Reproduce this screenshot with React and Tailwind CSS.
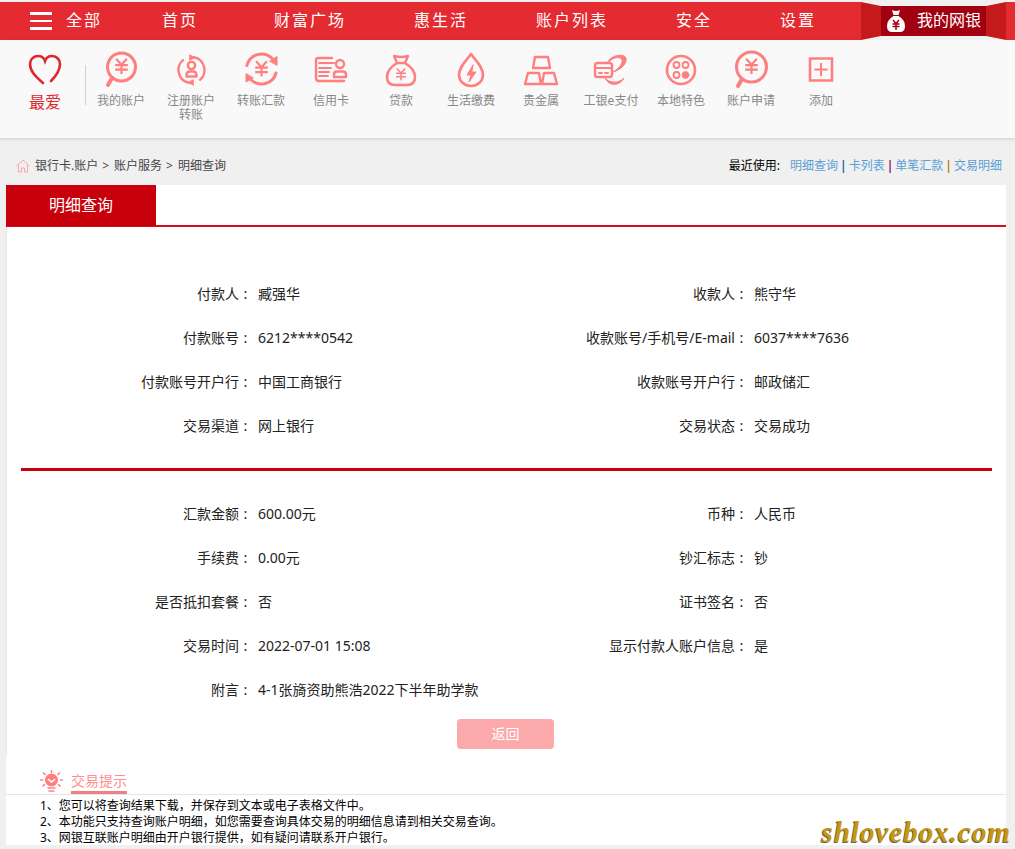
const pink = "#ff7f7f";

function Yen({ x = 20, y = 17, s = 0.9, width = 2.4 }) {
  return (
    <g transform={`translate(${x} ${y}) scale(${s})`} fill="none" stroke={pink} strokeWidth={width} strokeLinecap="butt">
      <path d="M-6 -8 L0 -1.5 L6 -8 M-7 -1 H7 M-7 4 H7 M0 -1.5 V9" />
    </g>
  );
}

function IconBox({ children }) {
  return (
    <svg width="40" height="40" viewBox="0 0 40 40" fill="none" stroke={pink} strokeWidth="2.4" strokeLinecap="round" strokeLinejoin="round">
      {children}
    </svg>
  );
}

const icons = {
  account: (
    <IconBox>
      <circle cx="20.5" cy="17" r="14" strokeWidth="3" />
      <path d="M11 28 L7 35" strokeWidth="4" />
      <Yen x={20.5} y={16} />
    </IconBox>
  ),
  register: (
    <IconBox>
      <path d="M23 7.24 A13 13 0 0 1 29 29.8 M18 32.76 A13 13 0 0 1 12 10.2" strokeWidth="2.4" />
      <path d="M19 5 L24 7.5 L19 10 Z M22 30 L17 32.5 L22 35 Z" fill={pink} strokeWidth="1" />
      <circle cx="20.5" cy="15.5" r="3.6" />
      <path d="M15.5 26.5 V25 Q15.5 21.5 19 21.5 H22 Q25.5 21.5 25.5 25 V26.5 Z" />
    </IconBox>
  ),
  transfer: (
    <IconBox>
      <path d="M5.9 15.5 A15 15 0 0 1 31 8.3 M35 23 A15 15 0 0 1 10 29.7" strokeWidth="3" />
      <path d="M29 11 L36 6.5 L36 15 Z M5 24 L5 32 L12 28 Z" fill={pink} strokeWidth="1" />
      <Yen x={20.5} y={18.5} />
    </IconBox>
  ),
  card: (
    <IconBox>
      <path d="M21 8 H7 Q5 8 5 10 V28 Q5 31 8 31 H33" strokeWidth="2.4" />
      <path d="M8 13 H23 M8 18 H20 M8 22 H18 M8 26 H17" strokeWidth="2" />
      <circle cx="29" cy="14" r="4" />
      <path d="M23 27 V24.5 Q23 21.5 26 21.5 H32 Q35 21.5 35 24.5 V27 Z" />
    </IconBox>
  ),
  loan: (
    <IconBox>
      <path d="M13 6 Q20 8 27 6 L24 13 H16 Z" />
      <path d="M16 13 Q6 19 6 27 Q6 35 14 35 H26 Q34 35 34 27 Q34 19 24 13" strokeWidth="2.6" />
      <Yen x={20} y={24} s={0.7} width={2.2} />
    </IconBox>
  ),
  bill: (
    <IconBox>
      <path d="M20 4 C15 11 8 17 8 25 A12 11 0 0 0 32 25 C32 17 25 11 20 4 Z" strokeWidth="2.6" />
      <path d="M22 15 L16 25 H20 L18 32 L25 22 H21 Z" fill={pink} strokeWidth="1" />
    </IconBox>
  ),
  gold: (
    <IconBox>
      <path d="M14 7 H27 L29 18 H12 Z M7 23 H18 L20 34 H4 Z M23 23 H33 L36 34 H21 Z" strokeWidth="2.4" />
    </IconBox>
  ),
  epay: (
    <IconBox>
      <rect x="4" y="13" width="17" height="14" rx="2.5" />
      <path d="M4 18 H21 M8 23 H11 M14 23 H17" strokeWidth="2" />
      <path d="M17 11 C21 6 28 4 33 6 C37 8 35 14 31 17 C28 20 25 21 22 22 C27 19 32 14 31 10 C30 6 22 7 18 12 Z" fill={pink} strokeWidth="1" />
      <path d="M14 28 C18 33 27 34 33 28 C29 36 18 37 14 28 Z" fill={pink} strokeWidth="1" />
    </IconBox>
  ),
  local: (
    <IconBox>
      <circle cx="20" cy="20" r="14" strokeWidth="2.6" />
      <circle cx="15.5" cy="15" r="3" strokeWidth="1.8" />
      <circle cx="24.5" cy="15" r="3" strokeWidth="1.8" />
      <circle cx="15.5" cy="25" r="3" strokeWidth="1.8" />
      <circle cx="24.5" cy="25" r="3.4" fill={pink} strokeWidth="1" />
    </IconBox>
  ),
  apply: (
    <IconBox>
      <circle cx="20.5" cy="17" r="15" strokeWidth="3" />
      <path d="M11 29 L7 36" strokeWidth="4" />
      <Yen x={20.5} y={16} />
    </IconBox>
  ),
  add: (
    <IconBox>
      <path d="M9 8.5 H31 V30.5 H9 Z" strokeWidth="2.6" strokeLinejoin="miter" />
      <path d="M20 13 V26 M13.5 19.5 H26.5" strokeWidth="2" strokeLinecap="butt" />
    </IconBox>
  ),
};

const quickLinks = [
  { icon: "account", label: "我的账户" },
  { icon: "register", label: "注册账户", line2: "转账" },
  { icon: "transfer", label: "转账汇款" },
  { icon: "card", label: "信用卡" },
  { icon: "loan", label: "贷款" },
  { icon: "bill", label: "生活缴费" },
  { icon: "gold", label: "贵金属" },
  { icon: "epay", label: "工银e支付" },
  { icon: "local", label: "本地特色" },
  { icon: "apply", label: "账户申请" },
  { icon: "add", label: "添加" },
];

const navItems = [
  { label: "首页", cls: "ml-[60px]" },
  { label: "财富广场", cls: "ml-[76px]" },
  { label: "惠生活", cls: "ml-[68px]" },
  { label: "账户列表", cls: "ml-[68px]" },
  { label: "安全", cls: "ml-[68px]" },
  { label: "设置", cls: "ml-[68px]" },
];

function Row({ label, value }) {
  return (
    <div className="flex h-11 items-center text-sm text-[#222]">
      <span className="w-[232px] shrink-0 text-right">{label}</span>
      <span className="w-[13px] shrink-0 text-center">:</span>
      <span className="ml-[6px]">{value}</span>
    </div>
  );
}

function MoneyBag() {
  return (
    <svg width="20" height="24" viewBox="0 0 20 24">
      <path d="M6 1 Q10 3 14 1 L12.5 6 H7.5 Z" fill="#fff" />
      <path d="M7.5 7 Q1 11 1 17 Q1 23 6 23 H14 Q19 23 19 17 Q19 11 12.5 7 Z" fill="#fff" />
      <path d="M7 11 L10 14.5 L13 11 M6.5 15 H13.5 M6.5 17.5 H13.5 M10 14.5 V21" stroke="#a00010" strokeWidth="1.5" fill="none" />
    </svg>
  );
}

export default function App() {
  return (
    <div className="relative h-[849px] overflow-hidden bg-[#f0f0f0] pt-[2px] [font-family:'Noto_Sans','Noto_Sans_CJK_SC',sans-serif]">
      {/* top nav */}
      <div className="flex h-[38px] items-center bg-[#e52b32] pb-[3px] pl-[30px] text-white">
        <div className="mt-[3px] flex w-[22px] flex-col gap-[5px]">
          <div className="h-[2.5px] bg-white" />
          <div className="h-[2.5px] bg-white" />
          <div className="h-[2.5px] bg-white" />
        </div>
        <span className="ml-[14px] text-base tracking-[2px]">全部</span>
        {navItems.map((item) => (
          <span key={item.label} className={`${item.cls} text-base tracking-[2px]`}>
            {item.label}
          </span>
        ))}
        <div className="absolute left-[861px] top-[2px] flex h-[38px] w-[145px] bg-[#f2f0f0]">
          <div className="h-full w-5 bg-[#c41a1c] [clip-path:polygon(0_0,100%_4px,100%_34px,0_100%)]" />
          <div className="mt-1 flex h-[30px] w-[105px] items-center bg-[#a00010] pl-[5px]">
            <MoneyBag />
            <span className="mb-[3px] ml-[11px] text-base">我的网银</span>
          </div>
          <div className="h-full w-5 bg-[#c41a1c] [clip-path:polygon(0_4px,100%_0,100%_100%,0_34px)]" />
        </div>
      </div>

      {/* quick links */}
      <div className="flex h-[98px] bg-[#f9f9f9] pl-[15px] shadow-[0_1px_3px_rgba(0,0,0,0.15)]">
        <div className="flex w-[60px] flex-col items-center pt-[10px]">
          <svg width="40" height="40" viewBox="0 0 40 40" fill="none" stroke="#e0262e" strokeWidth="2.6" strokeLinecap="round">
            <path d="M18 33 C10 26 5 21 5 14 C5 9 9 6 13 6 C16 6 19 8 20 11 C21 8 24 6 27 6 C32 6 35 10 35 14 C35 20 31 26 26 31" />
          </svg>
          <span className="mt-[2px] text-base leading-5 text-[#e0262e]">最爱</span>
        </div>
        <div className="ml-[10px] mt-[25px] h-10 w-px bg-[#d0d0d0]" />
        {quickLinks.map((item) => (
          <div key={item.icon} className="flex w-[70px] flex-col items-center pt-[10px] text-center text-xs leading-[14px] text-[#888]">
            {icons[item.icon]}
            <span className="mt-[4px]">
              {item.label}
              {item.line2 && <br />}
              {item.line2}
            </span>
          </div>
        ))}
      </div>

      {/* breadcrumb */}
      <div className="flex h-[47px] items-center justify-between pl-4 pr-[13px] pt-[9px] text-xs">
        <div className="flex items-center text-[#444]">
          <svg width="14" height="14" viewBox="0 0 14 14" fill="none" stroke="#fda4a4" strokeWidth="1">
            <path d="M0.5 7 L7 1 L13.5 7 M2.5 6 V13 H5.5 V9 H8.5 V13 H11.5 V6" />
          </svg>
          <span className="ml-[5px]">银行卡.账户</span>
          <span className="ml-[4px] mr-[5px]">&gt;</span>
          <span>账户服务</span>
          <span className="ml-[4px] mr-[5px]">&gt;</span>
          <span>明细查询</span>
        </div>
        <div className="flex items-center text-[#5a9fd4]">
          <span className="mr-[10px] text-black">最近使用:</span>
          <span>明细查询</span>
          <span className="mx-[2px] font-semibold text-[#0060a0]">|</span>
          <span>卡列表</span>
          <span className="mx-[2px] font-semibold text-[#800060]">|</span>
          <span>单笔汇款</span>
          <span className="mx-[2px] font-semibold text-[#c07000]">|</span>
          <span>交易明细</span>
        </div>
      </div>

      <div className="mx-[6px] w-[1000px]">
        {/* tab */}
        <div className="h-[42px] border-b-2 border-[#d0101b] bg-white">
          <div className="flex h-[41px] w-[150px] items-center justify-center bg-[#c7000b] pb-[2px] text-base text-white">
            明细查询
          </div>
        </div>

        {/* detail */}
        <div className="border-l border-[#e8e8e8] bg-white pb-[7px] pt-[45px]">
          <div className="grid grid-cols-[496px_1fr]">
            <Row label="付款人" value="臧强华" />
            <Row label="收款人" value="熊守华" />
            <Row label="付款账号" value="6212****0542" />
            <Row label="收款账号/手机号/E-mail" value="6037****7636" />
            <Row label="付款账号开户行" value="中国工商银行" />
            <Row label="收款账号开户行" value="邮政储汇" />
            <Row label="交易渠道" value="网上银行" />
            <Row label="交易状态" value="交易成功" />
          </div>
          <div className="ml-[14px] mr-[14px] mt-5 h-[3px] bg-[#c7000b]" />
          <div className="mt-[21px] grid grid-cols-[496px_1fr]">
            <Row label="汇款金额" value="600.00元" />
            <Row label="币种" value="人民币" />
            <Row label="手续费" value="0.00元" />
            <Row label="钞汇标志" value="钞" />
            <Row label="是否抵扣套餐" value="否" />
            <Row label="证书签名" value="否" />
            <Row label="交易时间" value="2022-07-01 15:08" />
            <Row label="显示付款人账户信息" value="是" />
            <Row label="附言" value="4-1张旖资助熊浩2022下半年助学款" />
          </div>
          <div className="mr-[2px] mt-[7px] flex justify-center">
            <div className="flex h-[30px] w-[97px] items-center justify-center rounded-sm bg-[#fca9ac] text-sm text-white">
              返回
            </div>
          </div>
        </div>

        {/* tips */}
        <div className="h-[89px] bg-white">
          <div className="flex h-[39px] items-end border-b border-[#e5e5e5] pl-[34px]">
            <svg className="mb-[1px]" width="23" height="23" viewBox="0 0 23 23" fill="none" stroke="#ff7f7f" strokeWidth="1.6" strokeLinecap="round">
              <circle cx="11.5" cy="10" r="6.5" fill="#ff7f7f" stroke="none" />
              <path d="M8.5 9.5 L11.5 12 L14.5 9.5" stroke="#fff" />
              <path d="M8 18 H15 M9 21 H14 M11.5 0.8 V2.5 M3.5 3 L5 4.5 M19.5 3 L18 4.5 M0.8 10 H2.5 M20.5 10 H22.2 M3 16 L4.5 14.5 M20 16 L18.5 14.5" />
            </svg>
            <div className="ml-[8px] border-b-[3px] border-[#f07f7f] pb-[1px] text-sm leading-[18px] text-[#ff8f8f]">交易提示</div>
          </div>
          <div className="pl-[34px] pt-[3px] text-xs leading-4 text-black">
            <p>1、您可以将查询结果下载，并保存到文本或电子表格文件中。</p>
            <p>2、本功能只支持查询账户明细，如您需要查询具体交易的明细信息请到相关交易查询。</p>
            <p>3、网银互联账户明细由开户银行提供，如有疑问请联系开户银行。</p>
          </div>
        </div>
      </div>

      {/* watermark */}
      <div className="absolute bottom-[1px] right-[4px] text-[29px] font-bold italic leading-8 tracking-[1px] text-[#c8960f] [font-family:'Liberation_Serif',serif] [text-shadow:-1px_1px_0_#666]">
        shlovebox.com
      </div>
    </div>
  );
}
